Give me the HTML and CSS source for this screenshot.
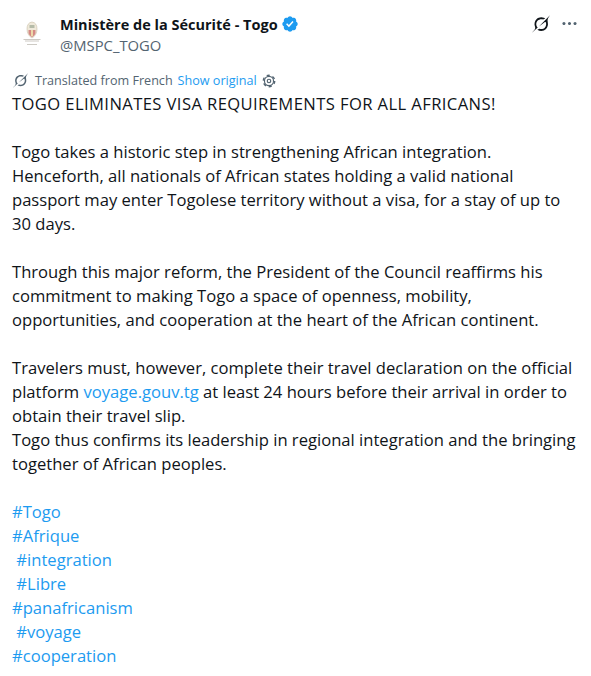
FILE: index.html
```html
<!DOCTYPE html>
<html lang="en">
<head>
<meta charset="utf-8">
<title>Ministère de la Sécurité - Togo</title>
<link rel="stylesheet" href="styles.css">
</head>
<body>
<article class="post">
  <header class="head">
    <svg class="avatar" viewBox="0 0 40 40" aria-hidden="true">
      <path d="M20 10c-3.500.5-5 3-5 7 0 4 2 7.500 5 9 3-1.500 5-5 5-9 0-4-1.500-6.500-5-7z" fill="#efe9da" stroke="#c9c0a8" stroke-width=".6"/>
      <path d="M16.500 18h7v3c0 1.500-1.800 3-3.500 4-1.700-1-3.500-2.500-3.500-4z" fill="#d58a84"/>
      <path d="M19 18h2v6h-2z" fill="#ecd9a8"/>
      <path d="M17.500 13h5v3h-5z" fill="#b5bba8"/>
      <path d="M11.500 27.500h17M13 29h14M15 32.500h10" stroke="#b8b3aa" stroke-width=".7"/>
    </svg>
    <div class="names">
      <div class="name-row">
        <span class="name">Ministère de la Sécurité - Togo</span>
        <svg class="badge" viewBox="0 0 22 22" aria-hidden="true"><path fill="#1d9bf0" d="M20.396 11c-.018-.646-.215-1.275-.57-1.816-.354-.54-.852-.972-1.438-1.246.223-.607.27-1.264.14-1.897-.131-.634-.437-1.218-.882-1.687-.47-.445-1.053-.75-1.687-.882-.633-.13-1.29-.083-1.897.14-.273-.587-.704-1.086-1.245-1.44S11.647 1.62 11 1.604c-.646.017-1.273.213-1.813.568s-.969.854-1.24 1.44c-.608-.223-1.267-.272-1.902-.14-.635.13-1.22.436-1.69.882-.445.47-.749 1.055-.878 1.688-.13.633-.08 1.29.144 1.896-.587.274-1.087.705-1.443 1.245-.356.54-.555 1.17-.574 1.817.02.647.218 1.276.574 1.817.356.54.856.972 1.443 1.245-.224.606-.274 1.263-.144 1.896.13.634.433 1.218.877 1.688.47.443 1.054.747 1.687.878.633.132 1.29.084 1.897-.136.274.586.705 1.084 1.246 1.439.54.354 1.17.551 1.816.569.647-.016 1.276-.213 1.817-.567s.972-.854 1.245-1.44c.604.239 1.266.296 1.903.164.636-.132 1.22-.447 1.68-.907.46-.46.776-1.044.908-1.681s.075-1.299-.165-1.903c.586-.274 1.084-.705 1.439-1.246.354-.54.551-1.17.569-1.816z"/><path fill="#fff" d="M9.662 14.85l-3.429-3.428 1.293-1.302 2.072 2.072 4.4-4.794 1.347 1.246z"/></svg>
      </div>
      <div class="handle">@MSPC_TOGO</div>
    </div>
    <div class="actions">
      <svg class="grok" viewBox="0 0 33 32" aria-hidden="true"><path fill="#0f1419" d="M12.745 20.54l10.97-8.19c.539-.4 1.307-.244 1.564.38 1.349 3.288.746 7.241-1.938 9.955-2.683 2.714-6.417 3.31-9.83 1.954l-3.728 1.745c5.347 3.697 11.84 2.782 15.898-1.324 3.219-3.255 4.216-7.692 3.284-11.693l.008.009c-1.351-5.878.332-8.227 3.782-13.031L33 0l-4.54 4.59v-.014L12.743 20.544m-2.263 1.987c-3.837-3.707-3.175-9.446.1-12.755 2.42-2.449 6.388-3.448 9.852-1.979l3.72-1.737c-.67-.49-1.53-1.017-2.515-1.387-4.455-1.854-9.789-.931-13.41 2.728-3.483 3.523-4.579 8.94-2.697 13.561 1.405 3.454-.899 5.898-3.22 8.364C1.49 30.2.666 31.074 0 32l10.478-9.466"/></svg>
      <svg class="more" viewBox="0 0 24 24" aria-hidden="true"><path fill="#536471" d="M3 12c0-1.100.9-2 2-2s2 .9 2 2-.9 2-2 2-2-.9-2-2zm9 2c1.100 0 2-.9 2-2s-.9-2-2-2-2 .9-2 2 .9 2 2 2zm7 0c1.100 0 2-.9 2-2s-.9-2-2-2-2 .9-2 2 .9 2 2 2z"/></svg>
    </div>
  </header>
  <div class="translation">
    <svg class="grok-small" viewBox="0 0 33 32" aria-hidden="true"><path fill="#536471" d="M12.745 20.54l10.97-8.19c.539-.4 1.307-.244 1.564.38 1.349 3.288.746 7.241-1.938 9.955-2.683 2.714-6.417 3.31-9.83 1.954l-3.728 1.745c5.347 3.697 11.84 2.782 15.898-1.324 3.219-3.255 4.216-7.692 3.284-11.693l.008.009c-1.351-5.878.332-8.227 3.782-13.031L33 0l-4.54 4.59v-.014L12.743 20.544m-2.263 1.987c-3.837-3.707-3.175-9.446.1-12.755 2.42-2.449 6.388-3.448 9.852-1.979l3.72-1.737c-.67-.49-1.53-1.017-2.515-1.387-4.455-1.854-9.789-.931-13.41 2.728-3.483 3.523-4.579 8.94-2.697 13.561 1.405 3.454-.899 5.898-3.22 8.364C1.49 30.2.666 31.074 0 32l10.478-9.466"/></svg>
    <span class="translated">Translated from French</span>
    <span class="show">Show original</span>
    <svg class="gear" viewBox="0 0 24 24" aria-hidden="true" fill="none" stroke="#536471">
      <circle cx="12" cy="12" r="7.800" stroke-width="2"/>
      <circle cx="12" cy="12" r="9.800" stroke-width="2.400" stroke-dasharray="5.260 5"/>
      <circle cx="12" cy="12" r="3" stroke-width="2"/>
    </svg>
  </div>
  <div class="body">
    <p class="para caps">TOGO ELIMINATES VISA REQUIREMENTS FOR ALL AFRICANS!</p>
    <p class="para">Togo takes a historic step in strengthening African integration.<br>Henceforth, all nationals of African states holding a valid national<br>passport may enter Togolese territory without a visa, for a stay of up to<br>30 days.</p>
    <p class="para">Through this major reform, the President of the Council reaffirms his<br>commitment to making Togo a space of openness, mobility,<br>opportunities, and cooperation at the heart of the African continent.</p>
    <p class="para">Travelers must, however, complete their travel declaration on the official<br>platform <a class="link">voyage.gouv.tg</a> at least 24 hours before their arrival in order to<br>obtain their travel slip.<br>Togo thus confirms its leadership in regional integration and the bringing<br>together of African peoples.</p>
    <p class="para tags"><a class="link">#Togo</a><br><a class="link">#Afrique</a><br>&nbsp;<a class="link">#integration</a><br>&nbsp;<a class="link">#Libre</a><br><a class="link">#panafricanism</a><br>&nbsp;<a class="link">#voyage</a><br><a class="link">#cooperation</a></p>
  </div>
</article>
</body>
</html>
```
FILE: styles.css
```css
html, body {
  margin: 0;
  background: #fff;
}
body {
  width: 591px;
  height: 676px;
  overflow: hidden;
  font-family: "Open Sans", "Noto Sans", sans-serif;
  color: #0f1419;
}
.post {
  padding: 12px 12px 0 12px;
}
.head {
  display: flex;
  align-items: flex-start;
  height: 44px;
}
.avatar {
  width: 40px;
  height: 40px;
  margin-right: 8px;
  flex: none;
}
.names {
  flex: 1;
  padding-top: 1px;
}
.name-row {
  display: flex;
  align-items: center;
  gap: 3px;
  height: 22px;
}
.name {
  font-size: 14.500px;
  font-weight: 700;
}
.badge {
  width: 18px;
  height: 18px;
}
.handle {
  font-size: 14.800px;
  color: #536471;
  line-height: 20px;
}
.actions {
  display: flex;
  align-items: center;
  gap: 10px;
  padding-top: 2px;
}
.grok {
  width: 18px;
  height: 18px;
}
.more {
  width: 19px;
  height: 19px;
}
.translation {
  display: flex;
  align-items: center;
  height: 24px;
  margin-top: 12px;
  font-size: 12.600px;
}
.grok-small {
  width: 15px;
  height: 15px;
  margin: 0 7px 0 1px;
}
.translated {
  color: #536471;
  margin-right: 5px;
}
.show {
  color: #1d9bf0;
  margin-right: 5px;
}
.gear {
  width: 14px;
  height: 14px;
  margin-top: 2px;
}
.body {
  font-size: 16.600px;
  line-height: 24px;
  white-space: nowrap;
}
.para {
  margin: 0 0 24px;
}
.caps {
  letter-spacing: 0.4px;
}
.link {
  color: #1d9bf0;
}
```
